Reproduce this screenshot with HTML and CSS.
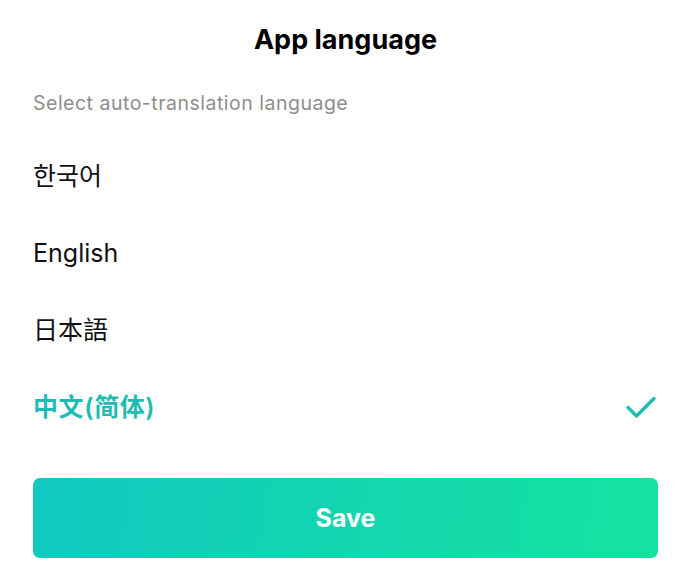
FILE: index.html
```html
<!DOCTYPE html>
<html>
<head>
<meta charset="utf-8">
<link rel="stylesheet" href="styles.css">
</head>
<body>
<div class="page">
  <h1 class="title">App language</h1>
  <p class="subtitle">Select auto-translation language</p>
  <ul class="list">
    <li class="item">한국어</li>
    <li class="item">English</li>
    <li class="item">日本語</li>
    <li class="item selected">中文(简体)
      <svg class="check" width="32" height="24" viewBox="0 0 32 24"><path d="M3 12.5 L11.5 21 L29 3.5" fill="none" stroke="#1fbcb4" stroke-width="3.4" stroke-linecap="round" stroke-linejoin="round"/></svg>
    </li>
  </ul>
  <button class="save">Save</button>
</div>
</body>
</html>
```
FILE: styles.css
```css
html, body {
  margin: 0;
  padding: 0;
  background: #fff;
}
body {
  font-family: Inter, "Noto Sans CJK SC", "Noto Sans CJK KR", sans-serif;
  color: #111;
}
.page {
  width: 690px;
  height: 577px;
  box-sizing: border-box;
  padding: 20px 32px 0 33px;
  display: flex;
  flex-direction: column;
}
.title {
  margin: 0;
  text-align: center;
  font-size: 27px;
  font-weight: 700;
  line-height: 40px;
  color: #000;
}
.subtitle {
  margin: 29px 0 0 0;
  font-size: 19.5px;
  line-height: 28px;
  letter-spacing: 0.5px;
  color: #8e8e8e;
}
.list {
  list-style: none;
  margin: 20.5px 0 0 0;
  padding: 0;
}
.item {
  height: 77px;
  display: flex;
  align-items: center;
  justify-content: space-between;
  font-size: 25px;
  line-height: 32px;
  color: #111;
}
.selected {
  color: #1fbcb4;
  font-weight: 600;
  letter-spacing: 0.6px;
}
.check {
  margin-right: 1px;
}
.save {
  margin-top: 32.5px;
  height: 80px;
  width: 625px;
  border: none;
  border-radius: 7px;
  background: linear-gradient(100deg, #10c8c0 0%, #13d6b0 50%, #16e29f 100%);
  color: #fff;
  font-family: Inter, sans-serif;
  font-size: 25px;
  font-weight: 700;
}
```
